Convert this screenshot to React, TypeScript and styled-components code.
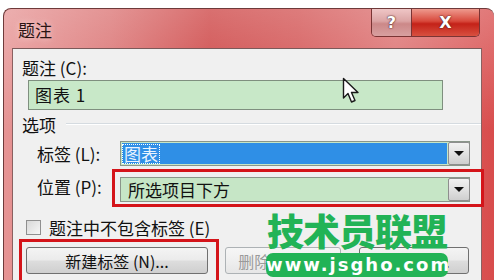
import styled, { createGlobalStyle } from "styled-components";

const GlobalStyle = createGlobalStyle`
  html, body {
    margin: 0;
    padding: 0;
    background: #ffffff;
    overflow: hidden;
  }
  #root {
    position: relative;
    width: 494px;
    height: 280px;
    overflow: hidden;
  }
`;

const FONT = `"Noto Sans CJK SC", "Noto Sans", "Liberation Sans", sans-serif`;

const Window = styled.div`
  position: relative;
  margin: 8px 0 0 3px;
  width: 491px;
  height: 272px;
  box-sizing: border-box;
  padding-left: 8px;
  border-top: 1px solid #6e3a3a;
  border-left: 1px solid #6e3a3a;
  border-radius: 8px 8px 0 0;
  background:
    linear-gradient(180deg, rgba(255, 255, 255, 0.25), rgba(255, 255, 255, 0) 45%),
    linear-gradient(90deg, #e69494 0%, #da7070 22%, #cc4040 42%, #d25050 60%, #dc6e6e 80%, #d84c4c 100%);
  display: flex;
  flex-direction: column;
`;

const TitleBar = styled.div`
  height: 41px;
  display: flex;
  align-items: flex-start;
  justify-content: space-between;
  padding: 0 14px 0 6px;
`;

const Title = styled.span`
  margin-top: 8px;
  font-family: ${FONT};
  font-size: 17px;
  color: #2a1414;
  text-shadow: 0 0 6px rgba(255, 230, 230, 0.9);
`;

const Caps = styled.div`
  display: flex;
  height: 27px;
  border: 1px solid #7a3434;
  border-top: none;
  border-radius: 0 0 5px 5px;
  overflow: hidden;
`;

const CapButton = styled.div<{ $w: number; $close?: boolean }>`
  width: ${(p) => p.$w}px;
  display: flex;
  align-items: center;
  justify-content: center;
  font-family: "DejaVu Sans", sans-serif;
  font-weight: bold;
  font-size: 16px;
  color: #ffffff;
  text-shadow: 0 0 2px #502020, 0 0 1px #502020;
  background: ${(p) =>
    p.$close
      ? "linear-gradient(180deg, #ee9a8e 0%, #d8493c 45%, #c42218 55%, #d85040 100%)"
      : "linear-gradient(180deg, #efc6c6 0%, #dba4a4 45%, #cc8888 55%, #d8a0a0 100%)"};
  & + & {
    border-left: 1px solid #7a3434;
  }
`;

const Panel = styled.div`
  position: relative;
  z-index: 1;
  width: 470px;
  flex: 1;
  box-sizing: border-box;
  border-top: 1px solid #7b5a5a;
  border-left: 1px solid #8a6060;
  border-right: 1px solid #8a6060;
  background: #f0f0f0;
  font-family: ${FONT};
  font-size: 16px;
  color: #111111;
  display: flex;
  flex-direction: column;
`;

const FieldLabel = styled.div`
  height: 22px;
  margin-top: 8px;
  padding-left: 9px;
  line-height: 22px;
  font-size: 17px;
`;

const TextBox = styled.div`
  margin: 1px 0 0 15px;
  width: 415px;
  height: 30px;
  box-sizing: border-box;
  border: 1px solid #7f8f7f;
  background: #c8e8c8;
  padding-left: 6px;
  line-height: 28px;
  font-size: 17px;
  letter-spacing: 1px;
`;

const GroupHeader = styled.div`
  margin-top: 2px;
  height: 24px;
  padding-left: 9px;
  display: flex;
  align-items: center;
  gap: 10px;
  font-size: 17px;
  &::after {
    content: "";
    flex: 1;
    height: 1px;
    background: #d5dbe0;
    border-bottom: 1px solid #ffffff;
  }
`;

const Row = styled.div<{ $top: number }>`
  margin-top: ${(p) => p.$top}px;
  display: flex;
  align-items: center;
  padding-left: 24px;
  font-size: 17px;
`;

const RowLabel = styled.div<{ $w: number }>`
  width: ${(p) => p.$w}px;
  flex-shrink: 0;
`;

const Highlight = styled.div`
  margin-top: 3px;
  box-sizing: border-box;
  border: 3px solid #d4141a;
  padding: 5px 11px 2px 5px;
`;

const Select = styled.div`
  width: 350px;
  height: 25px;
  box-sizing: border-box;
  border: 1px solid #8a968a;
  background: #c6e6c6;
  display: flex;
  align-items: stretch;
  padding: 1px 0 1px 1px;
`;

const SelectValue = styled.div<{ $selected?: boolean }>`
  flex: 1;
  display: flex;
  align-items: center;
  padding-left: ${(p) => (p.$selected ? 1 : 6)}px;
  background: ${(p) => (p.$selected ? "#2f8fe6" : "transparent")};
  color: ${(p) => (p.$selected ? "#eaf4ff" : "#111111")};
  font-size: 17px;
`;

const FocusText = styled.span`
  outline: 1px dotted #ffffff;
  line-height: 18px;
  padding: 0 1px;
`;

const DropButton = styled.div`
  width: 22px;
  box-sizing: border-box;
  border: 1px solid #8e8e8e;
  border-radius: 2px;
  background: linear-gradient(180deg, #f2f2f2 0%, #e2e2e2 50%, #cfcfcf 100%);
  display: flex;
  align-items: center;
  justify-content: center;
  margin: -1px -1px -1px 1px;
  &::before {
    content: "";
    border-left: 5px solid transparent;
    border-right: 5px solid transparent;
    border-top: 5px solid #111111;
  }
`;

const CheckRow = styled.div`
  margin-top: 11px;
  padding-left: 13px;
  height: 18px;
  display: flex;
  align-items: center;
  gap: 8px;
  font-size: 17px;
`;

const CheckBox = styled.div`
  width: 15px;
  height: 15px;
  box-sizing: border-box;
  border: 1px solid #8f8f8f;
  background: linear-gradient(135deg, #d8d8d8, #f6f6f6);
`;

const ButtonRow = styled.div`
  margin-top: 3px;
  padding-left: 6px;
  display: flex;
  align-items: flex-start;
`;

const ButtonFrame = styled.div`
  border: 3px solid #d4141a;
  border-bottom: none;
  padding: 5px 8px 6px 4px;
  margin-right: 6px;
`;

const Button = styled.div<{ $w: number; $disabled?: boolean; $top?: number; $left?: number }>`
  width: ${(p) => p.$w}px;
  height: 27px;
  margin-top: ${(p) => p.$top ?? 0}px;
  margin-left: ${(p) => p.$left ?? 0}px;
  box-sizing: border-box;
  border: 1px solid ${(p) => (p.$disabled ? "#adb2b5" : "#707070")};
  border-radius: 3px;
  background: ${(p) =>
    p.$disabled
      ? "linear-gradient(180deg, #f6f6f6 0%, #efefef 50%, #e6e6e6 100%)"
      : "linear-gradient(180deg, #f4f4f4 0%, #ebebeb 48%, #dddddd 52%, #cfcfcf 100%)"};
  color: ${(p) => (p.$disabled ? "#9a9a9a" : "#111111")};
  display: flex;
  align-items: center;
  justify-content: center;
  font-size: 16px;
`;

const Cursor = styled.svg`
  position: absolute;
  left: 342px;
  top: 77px;
  z-index: 3;
`;

const Watermark = styled.div`
  position: absolute;
  left: 264px;
  top: 207px;
  z-index: 4;
  display: flex;
  flex-direction: column;
  align-items: center;
  width: 186px;
`;

const MarkTitle = styled.div`
  font-family: ${FONT};
  font-weight: 900;
  font-size: 37px;
  line-height: 46px;
  letter-spacing: -1px;
  color: #22b356;
`;

const MarkUrl = styled.div`
  width: 182px;
  height: 24px;
  border-radius: 7px;
  background: #22b356;
  color: #ffffff;
  font-family: "DejaVu Sans", sans-serif;
  font-weight: bold;
  font-size: 18px;
  letter-spacing: 2px;
  line-height: 24px;
  text-align: center;
`;

export default function App() {
  return (
    <>
      <GlobalStyle />
      <Window>
        <TitleBar>
          <Title>题注</Title>
          <Caps>
            <CapButton $w={39}>?</CapButton>
            <CapButton $w={67} $close>
              X
            </CapButton>
          </Caps>
        </TitleBar>
        <Panel>
          <FieldLabel>题注 (C):</FieldLabel>
          <TextBox>图表 1</TextBox>
          <GroupHeader>选项</GroupHeader>
          <Row $top={5}>
            <RowLabel $w={83}>标签 (L):</RowLabel>
            <Select>
              <SelectValue $selected>
                <FocusText>图表</FocusText>
              </SelectValue>
              <DropButton />
            </Select>
          </Row>
          <Row $top={0}>
            <RowLabel $w={75}>位置 (P):</RowLabel>
            <Highlight>
              <Select>
                <SelectValue>所选项目下方</SelectValue>
                <DropButton />
              </Select>
            </Highlight>
          </Row>
          <CheckRow>
            <CheckBox />
            <span>题注中不包含标签 (E)</span>
          </CheckRow>
          <ButtonRow>
            <ButtonFrame>
              <Button $w={182}>新建标签 (N)...</Button>
            </ButtonFrame>
            <Button $w={116} $disabled $top={8}>
              删除标签 (D)
            </Button>
            <Button $w={110} $top={8} $left={18}>
              编号 (U)...
            </Button>
          </ButtonRow>
        </Panel>
      </Window>
      <Cursor width="20" height="28" viewBox="0 0 20 28">
        <path
          d="M1.5 1.5 L1.5 21 L6 16.5 L9.5 25 L13 23.5 L9.5 15.5 L16 15.5 Z"
          fill="#ffffff"
          stroke="#1a1a1a"
          strokeWidth="1.4"
          strokeLinejoin="round"
        />
      </Cursor>
      <Watermark>
        <MarkTitle>技术员联盟</MarkTitle>
        <MarkUrl>www.jsgho.com</MarkUrl>
      </Watermark>
    </>
  );
}
